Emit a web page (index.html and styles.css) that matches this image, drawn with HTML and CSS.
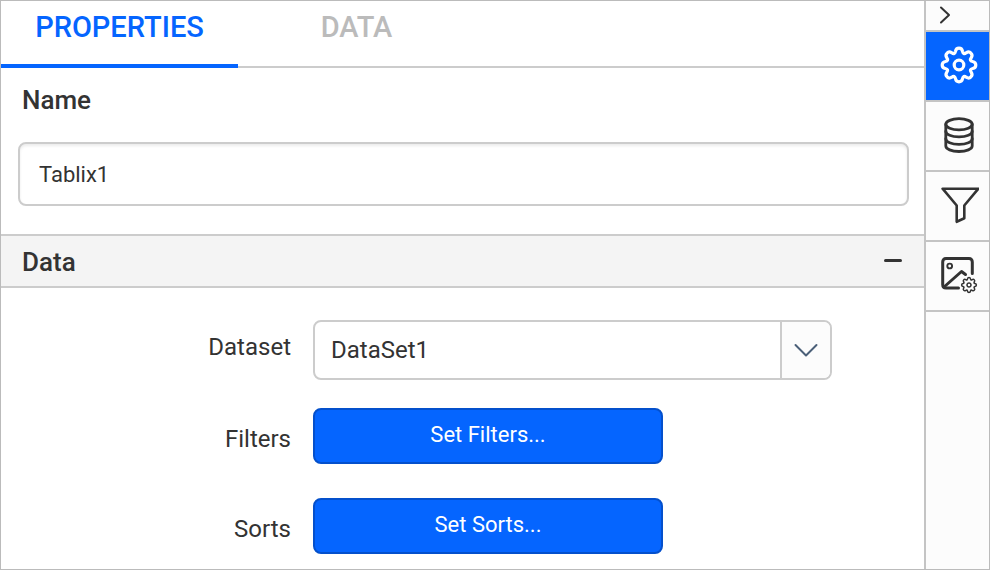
FILE: index.html
```html
<!DOCTYPE html>
<html lang="en">
<head>
    <meta charset="utf-8">
    <title>Report Item Properties</title>
    <link rel="stylesheet" href="styles.css">
</head>

<body>
    <div class="designer">
        <main class="panel">
            <div class="tabs" role="tablist">
                <button type="button" class="tab tab-active" role="tab" aria-selected="true">PROPERTIES</button>
                <button type="button" class="tab" role="tab" aria-selected="false">DATA</button>
            </div>

            <div class="name-block">
                <label class="name-label" for="item-name">Name</label>
                <input class="name-input" type="text" id="item-name" value="Tablix1">
            </div>

            <button type="button" class="section-header" aria-expanded="true">
                <span>Data</span>
                <svg class="minus" width="18" height="18" viewBox="0 0 18 18">
                    <path d="M1.5 7.5H16.5"/>
                </svg>
            </button>

            <div class="section-body">
                <div class="row">
                    <label class="row-label row-label-select" for="dataset">Dataset</label>
                    <div class="dropdown">
                        <select class="dropdown-select" id="dataset">
                            <option>DataSet1</option>
                        </select>
                        <span class="dropdown-arrow">
                            <svg width="24" height="14" viewBox="0 0 24 14">
                                <path d="M1.5 2L12 12.5L22.5 2"/>
                            </svg>
                        </span>
                    </div>
                </div>
                <div class="row">
                    <label class="row-label" for="set-filters">Filters</label>
                    <button type="button" class="action-button" id="set-filters">Set Filters...</button>
                </div>
                <div class="row">
                    <label class="row-label" for="set-sorts">Sorts</label>
                    <button type="button" class="action-button" id="set-sorts">Set Sorts...</button>
                </div>
            </div>
        </main>

        <nav class="rail">
            <button type="button" class="rail-toggle" aria-label="Collapse panel">
                <svg width="12" height="20" viewBox="0 0 12 20">
                    <path d="M2 2.5L10 10L2 17.5"/>
                </svg>
            </button>
            <button type="button" class="rail-button rail-button-active" aria-label="Properties">
                <svg class="rail-icon" width="40" height="40" viewBox="0 0 40 40">
                    <defs>
                        <path id="gear" d="M0,-16.8Q2.9,-16.8 3.5,-13.7Q4.4,-10 7.2,-12.2Q10,-14 11.9,-11.9Q14,-10 12.2,-7.2Q10,-4.4 13.7,-3.5Q16.8,-2.9 16.8,0Q16.8,2.9 13.7,3.5Q10,4.4 12.2,7.2Q14,10 11.9,11.9Q10,14 7.2,12.2Q4.4,10 3.5,13.7Q2.9,16.8 0,16.8Q-2.9,16.8 -3.5,13.7Q-4.4,10 -7.2,12.2Q-10,14 -11.9,11.9Q-14,10 -12.2,7.2Q-10,4.4 -13.7,3.5Q-16.8,2.9 -16.8,0Q-16.8,-2.9 -13.7,-3.5Q-10,-4.4 -12.2,-7.2Q-14,-10 -11.9,-11.9Q-10,-14 -7.2,-12.2Q-4.4,-10 -3.5,-13.7Q-2.9,-16.8 0,-16.8Z"/>
                    </defs>
                    <g transform="translate(20 19)" stroke-width="3.2">
                        <use href="#gear"/>
                        <circle r="4.8"/>
                    </g>
                </svg>
            </button>
            <button type="button" class="rail-button" aria-label="Data">
                <svg class="rail-icon" width="40" height="40" viewBox="0 0 40 40">
                    <g stroke-width="2.8">
                        <ellipse cx="20" cy="8.3" rx="13.2" ry="5.6"/>
                        <path d="M6.8 8.3V30C6.8 33 12.5 35.5 20 35.5S33.2 33 33.2 30V8.3"/>
                        <path d="M6.8 15.3C6.8 18.4 12.5 20.9 20 20.9S33.2 18.4 33.2 15.3"/>
                        <path d="M6.8 22.7C6.8 25.8 12.5 28.3 20 28.3S33.2 25.8 33.2 22.7"/>
                    </g>
                </svg>
            </button>
            <button type="button" class="rail-button" aria-label="Filters">
                <svg class="rail-icon" width="40" height="40" viewBox="0 0 40 40">
                    <path stroke-width="2.6" d="M3.6 2.7H39.4L25.3 19.5V32.3L17.7 35.8V19.5Z"/>
                </svg>
            </button>
            <button type="button" class="rail-button" aria-label="Image settings">
                <svg class="rail-icon" width="40" height="40" viewBox="0 0 40 40">
                    <g stroke-width="3">
                        <path d="M33.3 17.5V6Q33.3 2.6 30 2.6H7Q3.7 2.6 3.7 6V28.5Q3.7 32 7 32H19.5"/>
                        <path d="M5 31L22.5 15.5L26.5 18.5"/>
                    </g>
                    <circle cx="10.7" cy="10" r="2.4" stroke-width="1.9"/>
                    <g transform="translate(30 29) scale(.44)" stroke-width="3.4">
                        <use href="#gear"/>
                        <circle r="4.6"/>
                    </g>
                </svg>
            </button>
        </nav>
    </div>
</body>
</html>
```
FILE: styles.css
```css
* {
    box-sizing: border-box;
}

body {
    margin: 0;
    font-family: Roboto, "Liberation Sans", sans-serif;
    color: #333333;
    background: #ffffff;
}

button, input, select {
    font-family: inherit;
    color: inherit;
    margin: 0;
}

svg {
    display: block;
    fill: none;
    stroke: currentColor;
    stroke-linecap: round;
    stroke-linejoin: round;
}

.designer {
    display: flex;
    min-height: 100vh;
    border: 1px solid #bbbbbb;
}

.panel {
    flex: 1;
    min-width: 0;
}

/* tabs */
.tabs {
    display: flex;
    height: 67px;
    border-bottom: 2px solid #cccccc;
}

.tab {
    height: 67px;
    min-width: 237px;
    padding: 0 30px 12px;
    border: 0;
    border-bottom: 4px solid transparent;
    background: none;
    font-size: 29px;
    line-height: 32px;
    font-weight: 500;
    color: #bbbbbb;
}

.tab-active {
    border-bottom-color: #0565ff;
    color: #0565ff;
}

/* name */
.name-block {
    padding: 16px 15px 28px 17px;
}

.name-label {
    display: block;
    padding-left: 4px;
    margin-bottom: 26px;
    font-size: 26px;
    line-height: 32px;
    font-weight: 500;
}

.name-input {
    display: block;
    width: 100%;
    height: 64px;
    padding: 0 19px;
    border: 2px solid #cccccc;
    border-radius: 8px;
    box-shadow: inset 0 2px 3px rgba(0, 0, 0, .08);
    font-size: 22px;
}

/* section */
.section-header {
    display: flex;
    align-items: center;
    justify-content: space-between;
    width: 100%;
    height: 54px;
    padding: 2px 22px 0 21px;
    border: 0;
    border-top: 2px solid #cccccc;
    border-bottom: 2px solid #cccccc;
    background: #f4f4f4;
    font-size: 26px;
    line-height: 32px;
    font-weight: 500;
}

.minus {
    stroke-width: 3;
}

.section-body {
    padding: 32px 0 15px;
}

.row {
    display: flex;
    align-items: flex-start;
    gap: 22px;
}

.row + .row {
    margin-top: 34px;
}

.row:first-child + .row {
    margin-top: 28px;
}

.row-label {
    width: 290px;
    padding-top: 17px;
    font-size: 24px;
    line-height: 28px;
    text-align: right;
}

.row-label-select {
    padding-top: 13px;
}

.dropdown {
    position: relative;
    width: 519px;
}

.dropdown-select {
    appearance: none;
    display: block;
    width: 100%;
    height: 60px;
    padding: 0 60px 0 16px;
    border: 2px solid #cccccc;
    border-radius: 8px;
    background: #ffffff;
    font-size: 24px;
}

.dropdown-arrow {
    position: absolute;
    top: 2px;
    right: 2px;
    bottom: 2px;
    width: 50px;
    display: flex;
    align-items: center;
    justify-content: center;
    border-left: 2px solid #cccccc;
    border-radius: 0 6px 6px 0;
    background: #fcfcfc;
    color: #4b5f78;
    stroke-width: 2;
    pointer-events: none;
}

.action-button {
    width: 350px;
    height: 56px;
    padding: 0 0 4px;
    border: 2px solid #0450cc;
    border-radius: 8px;
    background: #0565ff;
    color: #ffffff;
    font-size: 22px;
}

/* right icon rail */
.rail {
    width: 65px;
    border-left: 2px solid #c4c4c4;
    background: #fcfcfc;
}

.rail-toggle {
    display: flex;
    align-items: center;
    width: 100%;
    height: 31px;
    padding: 0 0 2px 13px;
    border: 0;
    border-bottom: 2px solid #c4c4c4;
    background: none;
    stroke-width: 2;
}

.rail-button {
    display: flex;
    align-items: center;
    justify-content: center;
    width: 100%;
    height: 70px;
    padding: 0 0 0 3px;
    border: 0;
    border-bottom: 2px solid #c4c4c4;
    background: none;
}

.rail-button-active {
    background: #0565ff;
    color: #ffffff;
}
```
